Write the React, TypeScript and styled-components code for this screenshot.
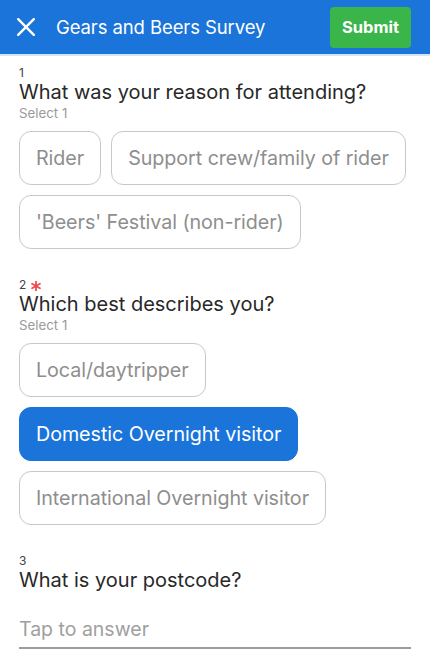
import React from "react";
import styled, { createGlobalStyle } from "styled-components";

const Global = createGlobalStyle`
  html, body { margin: 0; padding: 0; background: #fff; }
  body { font-family: Inter, "Noto Sans", sans-serif; -webkit-font-smoothing: antialiased; }
  * { box-sizing: border-box; }
`;

const Page = styled.div`
  width: 430px;
  min-height: 656px;
  background: #fff;
  overflow: hidden;
`;

const Header = styled.header`
  height: 56px;
  background: #1b74d9;
  border-bottom: 2px solid #d4e4f6;
  display: flex;
  align-items: center;
  padding: 0 19px 0 17px;
`;

const CloseButton = styled.button`
  width: 18px;
  height: 18px;
  padding: 0;
  border: none;
  background: none;
  display: flex;
  align-items: center;
  justify-content: center;
  margin: 0 21px 0 0;
`;

const Title = styled.h1`
  flex: 1;
  margin: 0;
  color: #fff;
  font-size: 18.5px;
  font-weight: 400;
  letter-spacing: -0.1px;
`;

const SubmitButton = styled.button`
  width: 81px;
  height: 41px;
  padding: 0;
  border: none;
  border-radius: 4px;
  background: #3ab54a;
  color: #fff;
  font-family: Inter, "Noto Sans", sans-serif;
  font-size: 16.5px;
  font-weight: 700;
`;

const Body = styled.main`
  padding: 10px 19px 0 19px;
`;

const Question = styled.section<{ $gap?: number }>`
  margin-bottom: ${(p) => p.$gap ?? 0}px;
`;

const Num = styled.div`
  font-size: 12px;
  color: #444;
  line-height: 14px;
  height: 14px;
  display: flex;
  align-items: center;
  gap: 5px;
`;

const Star = styled.svg`
  display: block;
  margin-top: 2px;
`;

const QTitle = styled.h2`
  margin: 0;
  font-size: 20px;
  font-weight: 400;
  color: #282828;
  line-height: 24px;
  letter-spacing: 0;
`;

const Hint = styled.div`
  font-size: 13.3px;
  color: #9a9a9a;
  line-height: 16px;
  margin-top: 1px;
`;

const Options = styled.div`
  display: flex;
  flex-wrap: wrap;
  gap: 10px;
  margin-top: 10px;
`;

const Chip = styled.button<{ $selected?: boolean }>`
  height: 54px;
  padding: 0 16px;
  border-radius: 12px;
  border: 1px solid ${(p) => (p.$selected ? "#1b74d9" : "#c8c8c8")};
  background: ${(p) => (p.$selected ? "#1b74d9" : "#fff")};
  color: ${(p) => (p.$selected ? "#fff" : "#8e8e8e")};
  font-family: Inter, "Noto Sans", sans-serif;
  font-size: 19.7px;
  font-weight: 400;
  letter-spacing: -0.05px;
`;

const Answer = styled.div`
  margin-top: 25px;
  padding-bottom: 6px;
  border-bottom: 2px solid #9c9c9c;
  font-size: 19.5px;
  color: #a0a0a0;
  line-height: 24px;
`;

export default function App() {
  return (
    <Page>
      <Global />
      <Header>
        <CloseButton aria-label="Close">
          <svg width="18" height="18" viewBox="0 0 18 18">
            <path d="M1.2 1.2 L16.8 16.8 M16.8 1.2 L1.2 16.8" stroke="#fff" strokeWidth="2.4" strokeLinecap="round" />
          </svg>
        </CloseButton>
        <Title>Gears and Beers Survey</Title>
        <SubmitButton>Submit</SubmitButton>
      </Header>
      <Body>
        <Question $gap={29}>
          <Num>1</Num>
          <QTitle>What was your reason for attending?</QTitle>
          <Hint>Select 1</Hint>
          <Options>
            <Chip>Rider</Chip>
            <Chip>Support crew/family of rider</Chip>
            <Chip>'Beers' Festival (non-rider)</Chip>
          </Options>
        </Question>
        <Question $gap={29}>
          <Num>
            2
            <Star width="10" height="10" viewBox="0 0 10 10">
              <path
                d="M5 0.5 V9.5 M1.1 2.75 L8.9 7.25 M8.9 2.75 L1.1 7.25"
                stroke="#f04a4a"
                strokeWidth="1.8"
                strokeLinecap="round"
              />
            </Star>
          </Num>
          <QTitle>Which best describes you?</QTitle>
          <Hint>Select 1</Hint>
          <Options>
            <Chip>Local/daytripper</Chip>
            <Chip $selected>Domestic Overnight visitor</Chip>
            <Chip>International Overnight visitor</Chip>
          </Options>
        </Question>
        <Question>
          <Num>3</Num>
          <QTitle>What is your postcode?</QTitle>
          <Answer>Tap to answer</Answer>
        </Question>
      </Body>
    </Page>
  );
}
